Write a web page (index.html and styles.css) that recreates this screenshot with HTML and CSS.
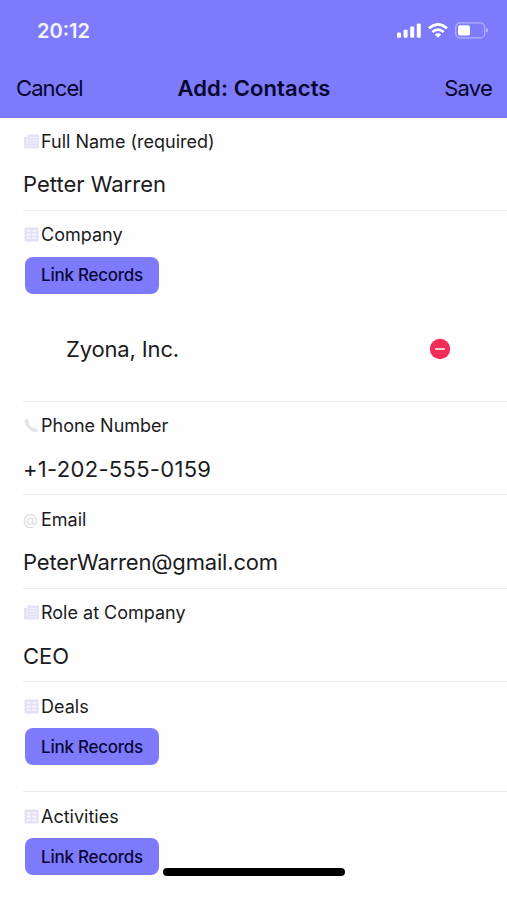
FILE: index.html
```html
<!DOCTYPE html>
<html lang="en">
<head>
    <meta charset="UTF-8" />
    <meta name="viewport" content="width=device-width, initial-scale=1.0" />
    <title>Add: Contacts</title>
    <link rel="stylesheet" href="styles.css">
</head>
<body>
    <!-- shared field icons -->
    <svg class="icon-defs" width="0" height="0" aria-hidden="true">
        <symbol id="icon-text" viewBox="0 0 16 15">
            <path d="M4 0.5h11.5v14H2Q0.5 14.5 0.5 13V3H4z" fill="#e4e2f7" />
            <path d="M3.8 3v9.5M6 3.5h7.5M6 6.3h7.5M6 9.1h7.5M6 11.9h7.5" fill="none" stroke="#f3f2fc" stroke-width="0.9" />
        </symbol>
        <symbol id="icon-table" viewBox="0 0 16 15">
            <rect x="1" y="0.5" width="14" height="14" rx="1" fill="#e4e0f5" />
            <path d="M3.2 3.2h4v1.6h-4zM8.8 3.2h4v1.6h-4zM3.2 6.4h4v2.2h-4zM8.8 6.4h4v2.2h-4zM3.2 10.2h4v1.8h-4zM8.8 10.2h4v1.8h-4z" fill="#f8f7fd" />
        </symbol>
        <symbol id="icon-phone" viewBox="0 0 16 15">
            <path d="M2 1.2Q3.2 0.2 4 1.2L5.6 3.8Q5.9 4.6 5 5.5Q6.4 8.6 9.6 10.3Q10.7 9.3 11.5 9.8L14.4 11.5Q15.4 12.3 14.3 13.3Q12.7 15 9.6 13.7Q3.9 11.2 1.5 5.5Q0.4 2.6 2 1.2z" fill="#e6e5ec" />
        </symbol>
    </svg>

    <header class="header">
        <div class="status-bar">
            <span class="time">20:12</span>
            <div class="status-icons">
                <svg width="24" height="15" viewBox="0 0 24 15" fill="#fff">
                    <rect x="0" y="9.5" width="4" height="5.3" rx="1" />
                    <rect x="6.6" y="6.8" width="4" height="8" rx="1" />
                    <rect x="13.2" y="3.6" width="4" height="11.2" rx="1" />
                    <rect x="19.8" y="0.4" width="4" height="14.4" rx="1" />
                </svg>
                <svg width="20" height="15" viewBox="0 0 20 15" fill="none" stroke="#fff" stroke-width="2.7">
                    <path d="M1 5.3Q10-2.6 19 5.3" />
                    <path d="M4.4 9Q10 4.2 15.6 9" />
                    <path d="M10 14.8L6.8 11.6Q10 8.9 13.2 11.6z" fill="#fff" stroke="none" />
                </svg>
                <svg width="34" height="17" viewBox="0 0 34 17">
                    <rect x="0.7" y="0.9" width="29" height="15" rx="4.5" fill="none" stroke="#b5b3fd" stroke-width="1.2" />
                    <rect x="3" y="3.2" width="12" height="10.4" rx="2" fill="#fff" />
                    <path d="M31 5.8Q33.2 6.6 33.2 8.4Q33.2 10.2 31 11z" fill="#b5b3fd" />
                </svg>
            </div>
        </div>
        <nav class="nav-bar">
            <a class="nav-link">Cancel</a>
            <h1>Add: Contacts</h1>
            <a class="nav-link save">Save</a>
        </nav>
    </header>

    <main class="form">
        <div class="field">
            <div class="label"><svg class="icon"><use href="#icon-text" /></svg>Full Name (required)</div>
            <div class="value">Petter Warren</div>
        </div>

        <div class="field">
            <div class="label"><svg class="icon"><use href="#icon-table" /></svg>Company</div>
            <button class="link-btn">Link Records</button>
            <div class="record">
                <span>Zyona, Inc.</span>
                <svg class="remove" width="22" height="22" viewBox="0 0 22 22">
                    <circle cx="11" cy="11" r="10.2" fill="#f12c56" />
                    <path d="M6 11h10" stroke="#ffc9d3" stroke-width="2" />
                </svg>
            </div>
        </div>

        <div class="field">
            <div class="label"><svg class="icon"><use href="#icon-phone" /></svg>Phone Number</div>
            <div class="value phone">+1-202-555-0159</div>
        </div>

        <div class="field">
            <div class="label"><span class="icon at">@</span>Email</div>
            <div class="value email">PeterWarren@gmail.com</div>
        </div>

        <div class="field">
            <div class="label"><svg class="icon"><use href="#icon-text" /></svg>Role at Company</div>
            <div class="value">CEO</div>
        </div>

        <div class="field">
            <div class="label"><svg class="icon"><use href="#icon-table" /></svg>Deals</div>
            <button class="link-btn">Link Records</button>
        </div>

        <div class="field">
            <div class="label"><svg class="icon"><use href="#icon-table" /></svg>Activities</div>
            <button class="link-btn">Link Records</button>
        </div>
    </main>

    <div class="home-indicator"></div>
</body>
</html>
```
FILE: styles.css
```css
*, *::before, *::after {
    box-sizing: border-box;
    margin: 0;
    padding: 0;
}

body {
    position: relative;
    height: 900px;
    overflow: hidden;
    background: #fefefe;
    color: #1b1b1d;
    font-family: Inter, "Liberation Sans", sans-serif;
}

.icon-defs {
    position: absolute;
}

/* Header */
.header {
    height: 118px;
    background: #7e7afc;
}

.status-bar {
    display: flex;
    justify-content: space-between;
    align-items: center;
    height: 61px;
    padding: 0 18px 0 37px;
}

.time {
    color: #f5f4ff;
    font-size: 20px;
    font-weight: 600;
}

.status-icons {
    display: flex;
    align-items: center;
    gap: 7px;
}

.nav-bar {
    display: grid;
    grid-template-columns: 1fr auto 1fr;
    align-items: center;
    height: 54px;
    padding: 0 15px 0 16px;
    color: #07062e;
}

    .nav-bar h1 {
        font-size: 22px;
        font-weight: 600;
        letter-spacing: 0.1px;
    }

.nav-link {
    font-size: 22px;
    letter-spacing: -0.9px;
}

.save {
    text-align: right;
    letter-spacing: -0.8px;
}

/* Form */
.form {
    margin-top: -1px;
}

.field {
    margin-left: 23px;
    min-height: 93.6px;
    padding-top: 14px;
    border-bottom: 1.5px solid #ebebed;
}

    .field:last-child {
        border-bottom: none;
    }

.label {
    display: flex;
    align-items: center;
    height: 20px;
    font-size: 18px;
}

.icon {
    flex: none;
    width: 17px;
    height: 15px;
    margin-right: 1px;
}

.at {
    color: #dcdbe4;
    font-size: 15px;
    line-height: 15px;
}

.value {
    margin-top: 19px;
    font-size: 22px;
    line-height: 28px;
}

.phone {
    letter-spacing: 0.3px;
}

.email {
    letter-spacing: -0.17px;
}

.link-btn {
    display: block;
    width: 134px;
    height: 37px;
    margin: 12px 0 26px 2px;
    border: none;
    border-radius: 8px;
    background: #7e7afc;
    color: #0b0838;
    font-family: inherit;
    font-size: 17px;
    font-weight: 500;
    letter-spacing: -0.25px;
}

.record {
    display: flex;
    justify-content: space-between;
    align-items: center;
    height: 58px;
    margin-bottom: 23px;
    padding: 0 56px 0 43px;
    font-size: 22px;
    letter-spacing: -0.15px;
}

.home-indicator {
    position: absolute;
    left: 163px;
    top: 868px;
    width: 182px;
    height: 8px;
    border-radius: 4px;
    background: #000;
}
```
